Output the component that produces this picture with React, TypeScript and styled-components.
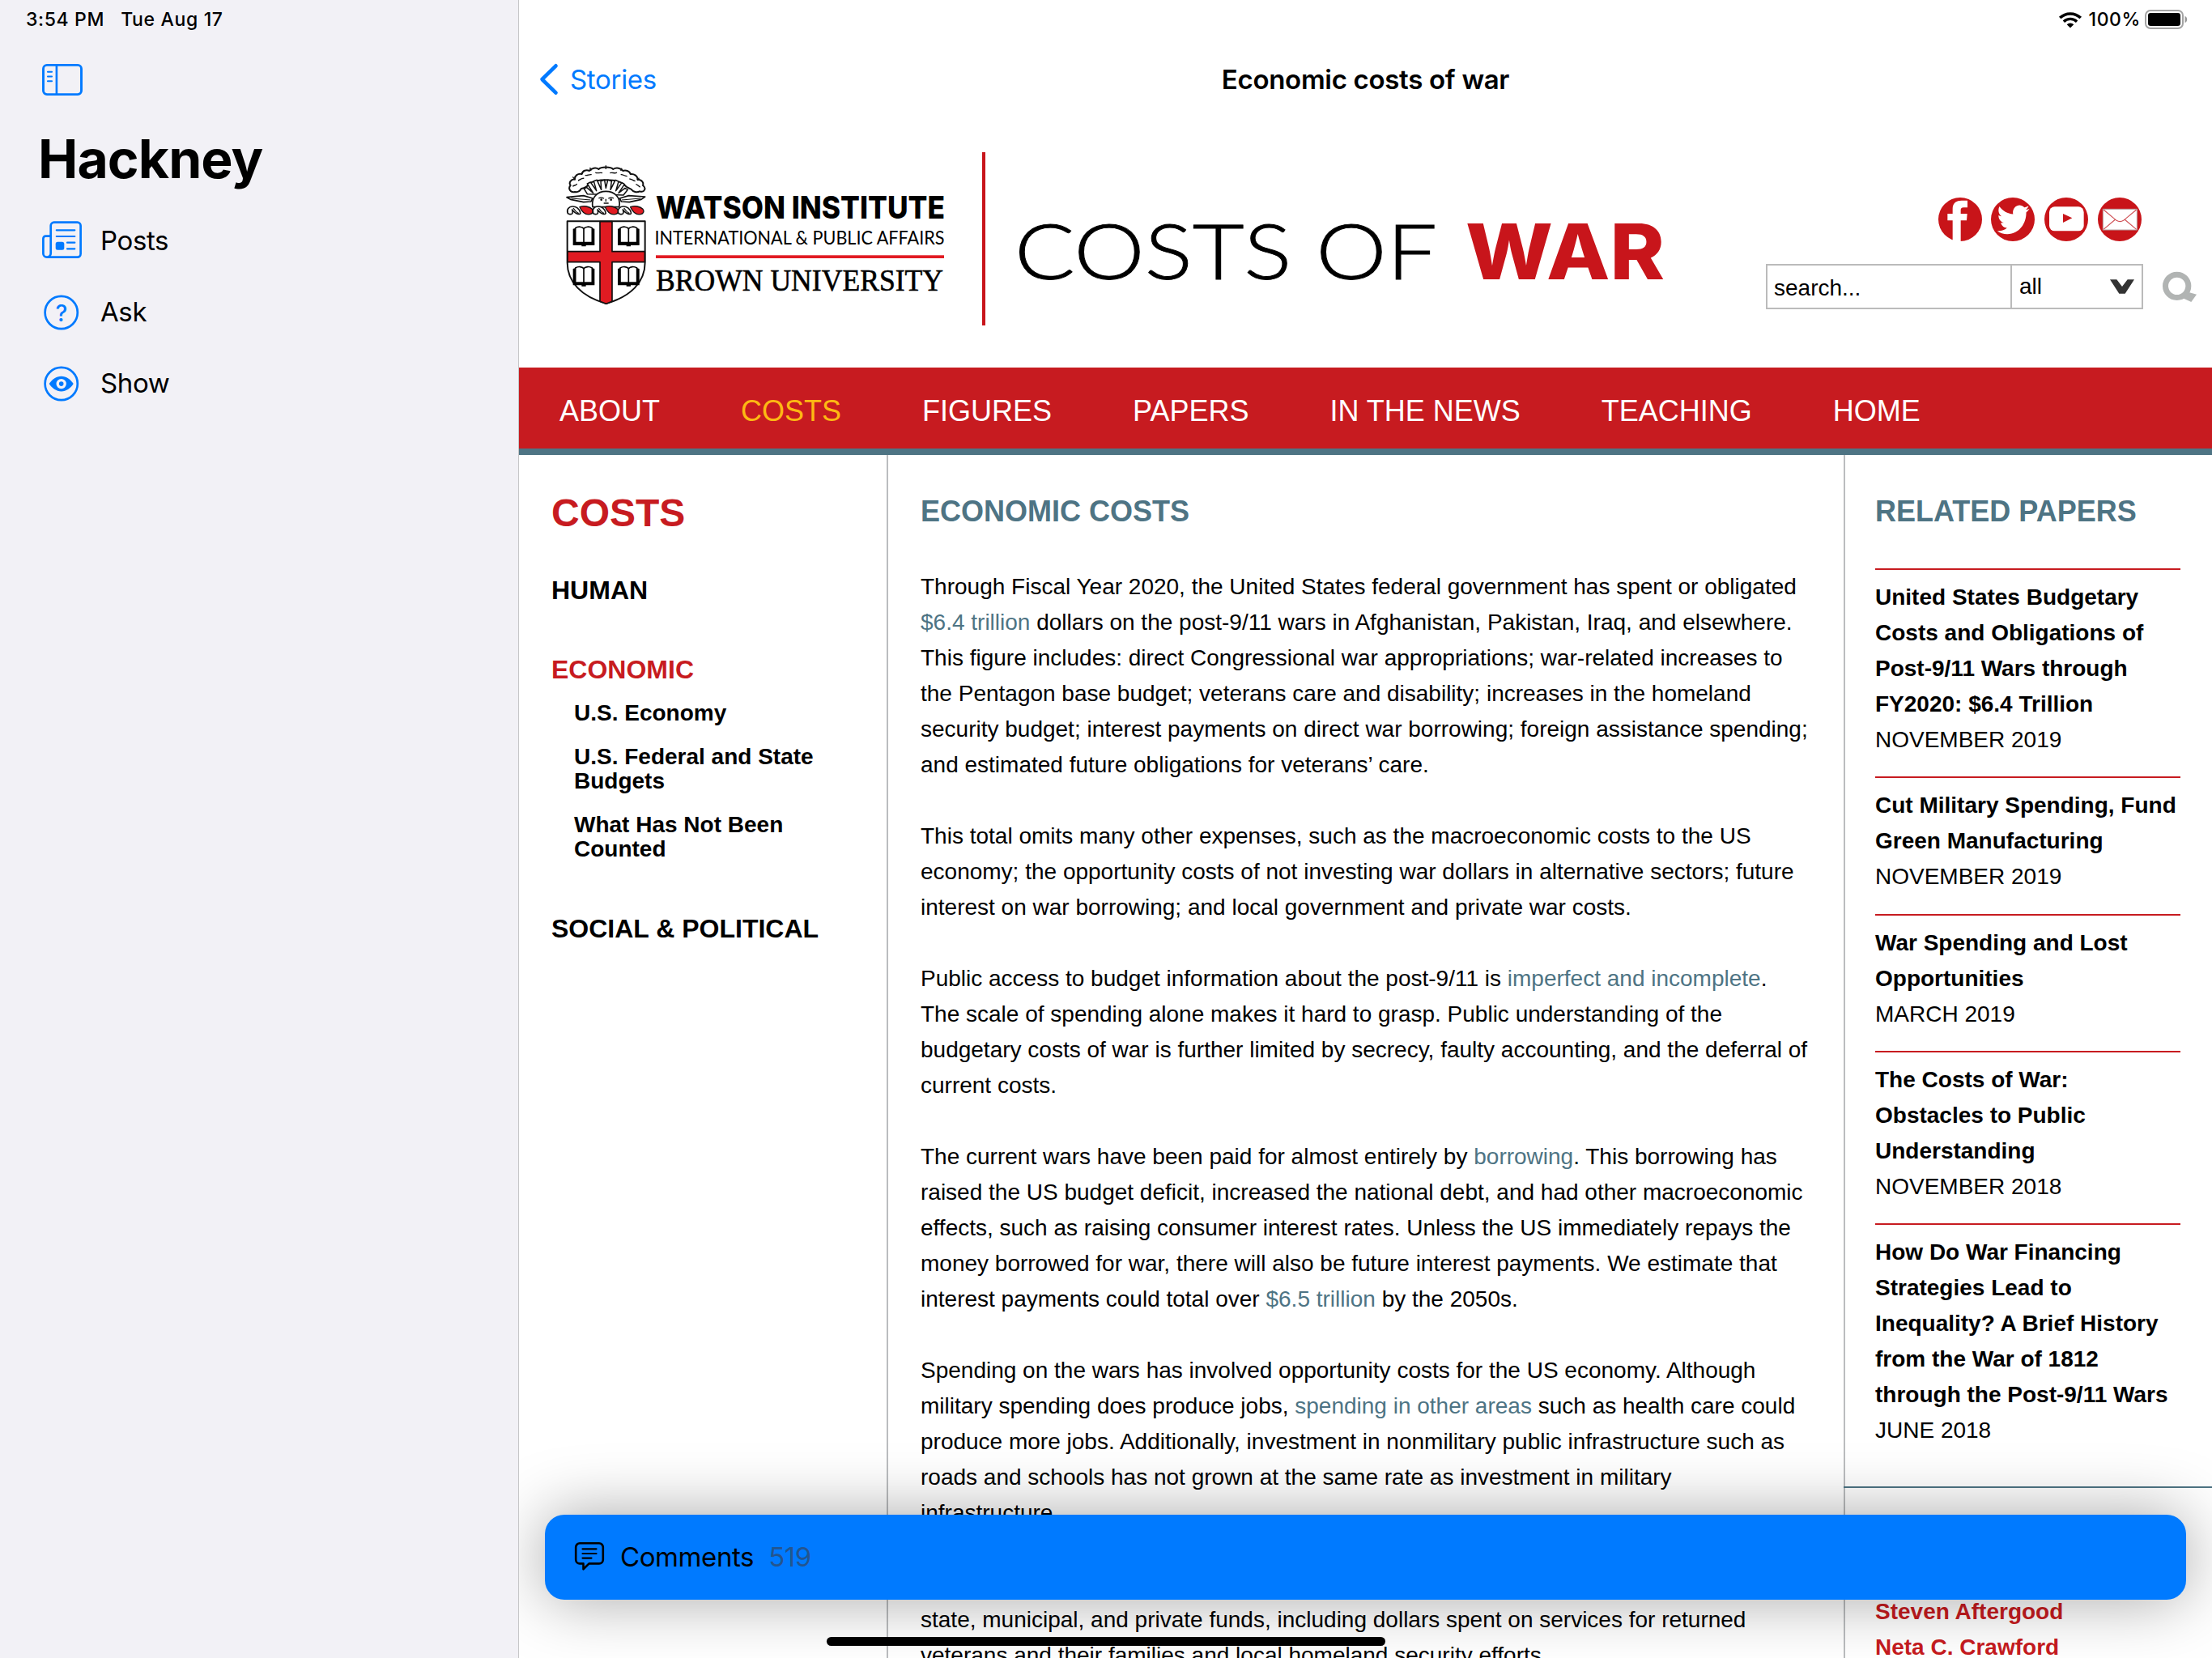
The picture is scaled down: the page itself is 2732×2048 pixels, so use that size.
import React from "react";
import styled, { createGlobalStyle } from "styled-components";

const SYSTEM = `Inter, "Liberation Sans", sans-serif`;
const WEB = `"Liberation Sans", Arial, sans-serif`;
const BLUE = "#007aff";
const RED = "#c71b20";
const TEAL = "#4e7484";

const GlobalStyle = createGlobalStyle`
  * { box-sizing: border-box; }
  body { margin: 0; background: #fff; }
  svg { overflow: visible; flex: none; }
`;

const Screen = styled.div`
  display: grid;
  grid-template-columns: 641px 2091px;
  width: 2732px;
  height: 2048px;
  overflow: hidden;
  position: relative;
  color: #000;
  font-family: ${SYSTEM};
`;

/* ---------- sidebar ---------- */

const Sidebar = styled.aside`
  height: 2048px;
  background: #f2f1f6;
  border-right: 1px solid #c6c6c8;
`;

const StatusBar = styled.div<{ $end?: boolean }>`
  display: flex;
  align-items: center;
  justify-content: ${(p) => (p.$end ? "flex-end" : "flex-start")};
  height: 48px;
  padding: ${(p) => (p.$end ? "0 30px 0 0" : "0 0 0 32px")};
  font-size: 23px;
  line-height: 48px;
  font-weight: 500;
  white-space: pre;
`;

const StatusText = styled.span<{ $track: number; $gap?: number }>`
  letter-spacing: ${(p) => p.$track}px;
  margin-right: ${(p) => p.$gap ?? 0}px;
`;

const SidebarTools = styled.div`
  display: flex;
  align-items: center;
  height: 108px;
  padding: 0 0 6px 50px;
`;

const AppTitle = styled.h1`
  margin: 0 0 17px;
  padding-left: 47px;
  font-size: 66px;
  line-height: 80px;
  font-weight: 700;
  letter-spacing: -0.9px;
`;

const NavRow = styled.a`
  display: flex;
  align-items: center;
  gap: 20px;
  height: 88px;
  padding-left: 50px;
  font-size: 33px;
  letter-spacing: -0.4px;
`;

/* ---------- detail pane ---------- */

const Detail = styled.main`
  position: relative;
  height: 2048px;
  overflow: hidden;
  background: #fff;
`;

const NavBar = styled.div`
  display: grid;
  grid-template-columns: 1fr auto 1fr;
  align-items: center;
  height: 100px;
  font-size: 33px;
  line-height: 44px;
`;

const BackButton = styled.a`
  display: flex;
  align-items: center;
  gap: 13px;
  padding-left: 25px;
  color: ${BLUE};
  letter-spacing: -0.3px;
`;

const NavTitle = styled.div`
  font-weight: 600;
  letter-spacing: -0.3px;
`;

const SiteHeader = styled.header`
  display: flex;
  align-items: flex-start;
  height: 306px;
  padding-top: 40px;
  padding-left: 49px;
`;

const HeaderRule = styled.div`
  width: 4px;
  height: 214px;
  margin: 0 32px 0 33px;
  background: #c8151b;
`;

const HeaderTools = styled.div`
  display: flex;
  flex-direction: column;
  margin: 56px 0 0 90px;
  width: 535px;
`;

const SearchRow = styled.div`
  display: flex;
  align-items: center;
  margin-top: 28px;
  font: 28px/52px ${WEB};
`;

const SearchField = styled.div`
  width: 302px;
  height: 56px;
  padding: 2px 0 0 8px;
  border: 2px solid #bbb;
  border-right: 0;
`;

const SearchScope = styled.div`
  display: flex;
  align-items: center;
  justify-content: space-between;
  width: 164px;
  height: 56px;
  padding: 0 9px 0 9px;
  margin-right: 24px;
  border: 2px solid #bbb;
`;

const SiteNav = styled.nav`
  display: flex;
  gap: 100px;
  height: 108px;
  padding-left: 50px;
  background: ${RED};
  border-bottom: 8px solid ${TEAL};
  font: 36px/108px ${WEB};
`;

const SiteNavLink = styled.a<{ $active?: boolean }>`
  color: ${(p) => (p.$active ? "#fdb813" : "#fff")};
`;

const Columns = styled.div`
  display: grid;
  grid-template-columns: 456px 1180px 455px;
  height: 1486px;
  overflow: hidden;
  font-family: ${WEB};
  white-space: nowrap;
`;

const SectionMenu = styled.div`
  padding: 44px 0 0 40px;
  border-right: 2px solid #bbbdbf;
  font-weight: 700;
`;

const MenuTitle = styled.h2`
  margin: 0 0 47px;
  font-size: 48px;
  line-height: 56px;
  color: ${RED};
`;

const MenuHead = styled.div<{ $active?: boolean; $before?: number }>`
  margin-top: ${(p) => p.$before ?? 0}px;
  font-size: 32px;
  line-height: 40px;
  color: ${(p) => (p.$active ? RED : "#000")};
`;

const MenuItem = styled.div<{ $before: number }>`
  margin-top: ${(p) => p.$before}px;
  padding-left: 28px;
  font-size: 28px;
  line-height: 30px;
`;

const Article = styled.article`
  padding: 48px 0 0 40px;
  font-size: 28px;
  line-height: 44px;
`;

const ColumnTitle = styled.h3<{ $after: number }>`
  margin: 0 0 ${(p) => p.$after}px;
  font-size: 36px;
  line-height: 44px;
  font-weight: 700;
  color: ${TEAL};
`;

const Paragraph = styled.p`
  margin: 0 0 44px;
`;

const Line = styled.span`
  display: block;
  height: 44px;
`;

const Link = styled.a`
  color: ${TEAL};
`;

const Related = styled.div`
  border-left: 2px solid #bbbdbf;
  font-size: 28px;
  line-height: 44px;
`;

const RelatedList = styled.div`
  height: 1274px;
  padding: 48px 39px 0 37px;
`;

const Paper = styled.div`
  padding: 12px 0 23.3px;
  border-top: 2px solid ${RED};
`;

const PaperTitle = styled.div`
  font-weight: 700;
`;

const People = styled.div`
  margin-left: -2px;
  padding: 131px 0 0 39px;
  border-top: 2px solid ${TEAL};
  font-weight: 700;
  color: ${RED};
`;

/* ---------- overlays ---------- */

const CommentsBar = styled.button`
  position: absolute;
  left: 32px;
  top: 1871px;
  display: flex;
  align-items: center;
  width: 2027px;
  height: 105px;
  padding: 0 0 1px 36px;
  border: 0;
  border-radius: 24px;
  background: ${BLUE};
  box-shadow: 0 0 80px rgba(0, 0, 0, 0.35);
  font: 33px/44px ${SYSTEM};
  color: #000;
  letter-spacing: -0.4px;
`;

const CommentsLabel = styled.span`
  margin-left: 19px;
`;

const CommentsCount = styled.span`
  margin-left: 18px;
  color: rgba(60, 60, 67, 0.6);
`;

const HomeIndicator = styled.div`
  position: absolute;
  left: 1021px;
  top: 2022px;
  width: 690px;
  height: 11px;
  border-radius: 6px;
  background: #000;
`;

/* ---------- drawings ---------- */

const SidebarIcon = () => (
  <svg width="54" height="42" viewBox="0 0 54 42" fill="none" stroke={BLUE} strokeLinecap="round">
    <rect x="3.5" y="2.4" width="47" height="36.2" rx="4.5" strokeWidth="2.9" />
    <path d="M19.9 2.4V38.6" strokeWidth="2.6" />
    <path d="M9 10.8H14M9 16.5H14M9 22.2H14" strokeWidth="2.1" />
  </svg>
);

const PostsIcon = () => (
  <svg width="54" height="54" viewBox="0 0 54 54" fill="none" stroke={BLUE} strokeLinecap="round">
    <path
      d="M12.7 43V8.7a4 4 0 0 1 4-4H45.6a4 4 0 0 1 4 4V43.6a4 4 0 0 1-4 4H7.8a4.4 4.4 0 0 1-4.4-4.4V24.7a3 3 0 0 1 3-3H12.7M12.7 43a4.6 4.6 0 0 1-4.6 4.6"
      strokeWidth="2.7"
    />
    <path d="M19.8 14.3H42.3M19.8 22H42.3M33 29.7H42.3M33 37.3H42.3" strokeWidth="2.2" />
    <rect x="18.7" y="28.7" width="10.6" height="10" rx="2.5" fill={BLUE} stroke="none" />
  </svg>
);

const AskIcon = () => (
  <svg width="54" height="54" viewBox="0 0 54 54">
    <circle cx="25.7" cy="28" r="20.1" fill="none" stroke={BLUE} strokeWidth="2.7" />
    <text x="25.7" y="38.5" textAnchor="middle" fontFamily={SYSTEM} fontSize="28" fontWeight="500" fill={BLUE}>
      ?
    </text>
  </svg>
);

const ShowIcon = () => (
  <svg width="54" height="54" viewBox="0 0 54 54">
    <circle cx="25.7" cy="28" r="20.1" fill="none" stroke={BLUE} strokeWidth="2.7" />
    <path d="M10.7 28.1C14 23 19.5 18.8 25.7 18.8S37.4 23 40.7 28.1C37.4 33.3 31.9 37.5 25.7 37.5S14 33.3 10.7 28.1Z" fill={BLUE} />
    <circle cx="25.7" cy="28.1" r="6.2" fill="#f2f1f6" />
    <circle cx="25.7" cy="28.1" r="2.8" fill={BLUE} />
  </svg>
);

const BackChevron = () => (
  <svg width="25" height="42" viewBox="0 0 25 42" fill="none" stroke={BLUE} strokeWidth="4.6" strokeLinecap="round" strokeLinejoin="round">
    <path d="M20.500 4.300L3.500 21L20.500 37.700" />
  </svg>
);

const WifiSvg = styled.svg`
  margin-right: 9px;
`;

const WifiIcon = () => (
  <WifiSvg width="28" height="21" viewBox="0 0 28 21" fill="none" stroke="#000">
    <path d="M1.2 8.1A18.3 18.3 0 0 1 26.8 8.1" strokeWidth="3.5" />
    <path d="M5.9 12.7A11.6 11.6 0 0 1 22.1 12.7" strokeWidth="3.3" />
    <path d="M14 20.5L9.7 16.2A6.1 6.1 0 0 1 18.3 16.2Z" fill="#000" stroke="none" />
  </WifiSvg>
);

const BatterySvg = styled.svg`
  margin-left: 5px;
`;

const BatteryIcon = () => (
  <BatterySvg width="53" height="24" viewBox="0 0 53 24">
    <rect x="1" y="1" width="46" height="22" rx="6" fill="none" stroke="#a3a3a3" strokeWidth="2" />
    <rect x="4" y="4" width="40" height="16" rx="3.2" fill="#000" />
    <path d="M49.5 8c3.6 1 3.6 7 0 8z" fill="#999" />
  </BatterySvg>
);

const Book = ({ x, y }: { x: number; y: number }) => (
  <g transform={`translate(${x} ${y})`}>
    <path d="M0 7L10 4V60H0ZM80 7L70 4V60H80Z" fill="#000" />
    <path d="M9 4C20-3 33-1 40 6C47-1 60-3 71 4V58H9Z" fill="#fff" stroke="#000" strokeWidth="5" />
    <path d="M40 4V60" stroke="#000" strokeWidth="5" />
    <path d="M0 59H80V68H48V72H32V68H0Z" fill="#000" />
  </g>
);

const Crest = () => (
  <g transform="translate(0 7) scale(0.3333)" stroke="#111" strokeLinejoin="round">
    <path
      d="M60 126C42 130 34 112 44 102C36 92 46 78 60 80C58 66 72 56 86 60C88 48 102 42 114 48C122 38 138 34 148 42C158 32 192 32 202 42C214 34 230 38 238 48C250 44 264 50 266 60C280 58 294 68 292 80C308 80 316 92 312 102C326 112 318 130 300 124C290 130 276 126 268 116C256 112 246 104 240 96C222 84 204 82 176 82C148 82 130 84 112 96C106 108 96 112 84 114C78 124 70 128 60 126Z"
      fill="#fff"
      strokeWidth="6"
    />
    <path d="M52 106C58 100 64 104 68 96M72 84C80 82 84 74 94 76M98 64C106 68 112 60 122 62M136 54C144 60 152 52 162 56M190 56C198 52 208 60 216 54M230 62C238 60 244 68 254 68M262 78C272 78 276 86 284 86M286 98C292 98 296 106 302 108" fill="none" strokeWidth="4" />
    <path d="M175 28V42M116 36L120 48M234 38L230 48M52 70L60 80M298 74L292 84" strokeWidth="4" />
    <path d="M106 134L94 114L104 110L128 130L106 96L118 90L140 122L130 86L142 82L158 118L156 86L170 82L175 112L182 82L196 86L192 118L210 82L222 88L212 122L234 92L244 98L222 130L246 112L256 118L240 138Z" fill="#fff" strokeWidth="4.500" />
    <path d="M30 146L92 140L126 150L120 162L92 164L44 154ZM320 144L260 140L226 150L232 162L262 164L306 154Z" fill="#fff" strokeWidth="5" />
    <path d="M46 150L118 156M304 150L234 156" strokeWidth="3" />
    <path d="M126 182C120 146 144 124 175 124S232 146 224 182Z" fill="#fff" strokeWidth="5" />
    <path d="M148 150Q158 144 168 151M184 151Q194 144 204 150M167 168H185M175 152V162" fill="none" strokeWidth="4" />
    <circle cx="158" cy="155" r="4" fill="#111" stroke="none" />
    <circle cx="194" cy="155" r="4" fill="#111" stroke="none" />
    {[32, 126, 220].map((x) => (
      <g key={x} transform={`translate(${x} 178)`} strokeWidth="5">
        <path d="M2 28C-4 14 6 2 20 2C36 2 44 12 48 24C50 28 46 32 40 30C30 28 24 22 18 14C22 24 20 32 10 31Z" fill="#fff" />
        <path d="M22 8C28 18 34 24 42 28" fill="none" strokeWidth="4" />
        <path d="M46 4C62-2 82 2 92 12C98 20 94 30 84 31C66 34 54 22 46 4Z" fill="#e11b22" strokeWidth="4" />
      </g>
    ))}
    <path d="M32 235H320V388C320 460 268 514 176 540C84 514 32 460 32 388Z" fill="#fff" strokeWidth="6" />
    <path d="M153 236H198V347H319V386H198V532L176 541L153 532V386H33V347H153Z" fill="#e11b22" strokeWidth="5" />
    <g stroke="none">
      <Book x={53} y={256} />
      <Book x={219} y={256} />
      <Book x={53} y={404} />
      <Book x={219} y={404} />
    </g>
  </g>
);

const BrandLogo = () => (
  <svg width="490" height="214" viewBox="0 0 490 214">
    <Crest />
    <text x="120" y="82" textLength="357" lengthAdjust="spacingAndGlyphs" fontFamily={SYSTEM} fontWeight="800" fontSize="38.5">
      WATSON INSTITUTE
    </text>
    <text x="118.5" y="114" textLength="358" lengthAdjust="spacingAndGlyphs" fontFamily="Lato, sans-serif" fontSize="23">
      INTERNATIONAL &amp; PUBLIC AFFAIRS
    </text>
    <rect x="120" y="127.3" width="356" height="3.7" fill="#e11b22" />
    <text x="120" y="171" textLength="355" lengthAdjust="spacingAndGlyphs" fontFamily='"Liberation Serif", serif' fontSize="38" stroke="#000" strokeWidth="0.6">
      BROWN UNIVERSITY
    </text>
  </svg>
);

const CostsOfWar = () => (
  <svg width="842" height="214" viewBox="0 0 842 214">
    <text x="4" y="157" textLength="522" lengthAdjust="spacingAndGlyphs" fontFamily="Lato, sans-serif" fontWeight="300" fontSize="94" fill="#000" stroke="#000" strokeWidth="0.9">
      COSTS OF
    </text>
    <text x="561" y="157" textLength="246" lengthAdjust="spacingAndGlyphs" fontFamily={SYSTEM} fontWeight="800" fontSize="95" fill="#c8151b">
      WAR
    </text>
  </svg>
);

const SocialSvg = styled.svg`
  margin-left: 213px;
`;

const SocialIcons = () => (
  <SocialSvg width="252" height="54" viewBox="12 27 756 162">
    <g fill="#c81419">
      <circle cx="93" cy="108" r="81" />
      <circle cx="288" cy="108" r="81" />
      <circle cx="486" cy="108" r="81" />
      <circle cx="684" cy="108" r="81" />
    </g>
    <path d="M65 190V112H46V87H65V68C65 48 78 38 98 38H120V64H106C97 64 95 68 95 74V87H119L117 112H95V190Z" fill="#fff" />
    <path
      transform="translate(230 43) scale(0.234 0.258)"
      fill="#fff"
      d="M459.37 151.716c.325 4.548.325 9.097.325 13.645 0 138.72-105.583 298.558-298.558 298.558-59.452 0-114.68-17.219-161.137-47.106 8.447.974 16.568 1.299 25.34 1.299 49.055 0 94.213-16.568 130.274-44.832-46.132-.975-84.792-31.188-98.112-72.772 6.498.974 12.995 1.624 19.818 1.624 9.421 0 18.843-1.3 27.614-3.573-48.081-9.747-84.143-51.98-84.143-102.985v-1.299c13.969 7.797 30.214 12.67 47.431 13.319-28.264-18.843-46.781-51.005-46.781-87.391 0-19.492 5.197-37.36 14.294-52.954 51.655 63.675 129.3 105.258 216.365 109.807-1.624-7.797-2.599-15.918-2.599-24.04 0-57.828 46.782-104.934 104.934-104.934 30.213 0 57.502 12.67 76.67 33.137 23.715-4.548 46.456-13.32 66.599-25.34-7.798 24.366-24.366 44.833-46.132 57.827 21.117-2.273 41.584-8.122 60.426-16.243-14.292 20.791-32.161 39.308-52.628 54.253z"
    />
    <rect x="423" y="61" width="128" height="90" rx="20" fill="#fff" />
    <path d="M474 87L508 103L474 120Z" fill="#c81419" />
    <rect x="622" y="70" width="126" height="77" fill="#fff" stroke="#b5a3a3" strokeWidth="3" />
    <path d="M624 72L672 112Q685 120 698 112L746 72M624 145L668 108M746 145L702 108" fill="none" stroke="#cf5055" strokeWidth="3.5" />
  </SocialSvg>
);

const ScopeChevron = () => (
  <svg width="30" height="18" viewBox="650 331 90 54">
    <path d="M650 332H675L695 358L715 332H740L706 384H684Z" fill="#333" />
  </svg>
);

const SearchIcon = () => (
  <svg width="43" height="38" viewBox="842 302 129 114">
    <circle cx="895" cy="357" r="42.5" fill="none" stroke="#b1b4b3" strokeWidth="21" />
    <path d="M926 376L968 388L948 416L914 400Z" fill="#b1b4b3" />
  </svg>
);

const CommentsIcon = () => (
  <svg width="38" height="38" viewBox="0 0 38 38" fill="none" stroke="#000" strokeWidth="2.6" strokeLinecap="round" strokeLinejoin="round">
    <path d="M7 2.3H31a4.8 4.8 0 0 1 4.8 4.8V22.6a4.8 4.8 0 0 1-4.8 4.8H18.5L11.5 34.3V27.4H7a4.8 4.8 0 0 1-4.8-4.8V7.1A4.8 4.8 0 0 1 7 2.3Z" />
    <path d="M10.5 9.3H27.5M10.5 15H27.5M10.5 20.6H21.5" strokeWidth="2.2" />
  </svg>
);

/* ---------- content ---------- */

const siteLinks = ["ABOUT", "COSTS", "FIGURES", "PAPERS", "IN THE NEWS", "TEACHING", "HOME"];

const paragraphs: React.ReactNode[][] = [
  [
    "Through Fiscal Year 2020, the United States federal government has spent or obligated",
    <><Link>$6.4 trillion</Link> dollars on the post-9/11 wars in Afghanistan, Pakistan, Iraq, and elsewhere.</>,
    "This figure includes: direct Congressional war appropriations; war-related increases to",
    "the Pentagon base budget; veterans care and disability; increases in the homeland",
    "security budget; interest payments on direct war borrowing; foreign assistance spending;",
    "and estimated future obligations for veterans’ care.",
  ],
  [
    "This total omits many other expenses, such as the macroeconomic costs to the US",
    "economy; the opportunity costs of not investing war dollars in alternative sectors; future",
    "interest on war borrowing; and local government and private war costs.",
  ],
  [
    <>Public access to budget information about the post-9/11 is <Link>imperfect and incomplete</Link>.</>,
    "The scale of spending alone makes it hard to grasp. Public understanding of the",
    "budgetary costs of war is further limited by secrecy, faulty accounting, and the deferral of",
    "current costs.",
  ],
  [
    <>The current wars have been paid for almost entirely by <Link>borrowing</Link>. This borrowing has</>,
    "raised the US budget deficit, increased the national debt, and had other macroeconomic",
    "effects, such as raising consumer interest rates. Unless the US immediately repays the",
    "money borrowed for war, there will also be future interest payments. We estimate that",
    <>interest payments could total over <Link>$6.5 trillion</Link> by the 2050s.</>,
  ],
  [
    "Spending on the wars has involved opportunity costs for the US economy. Although",
    <>military spending does produce jobs, <Link>spending in other areas</Link> such as health care could</>,
    "produce more jobs. Additionally, investment in nonmilitary public infrastructure such as",
    "roads and schools has not grown at the same rate as investment in military",
    "infrastructure.",
  ],
  [
    "",
    "state, municipal, and private funds, including dollars spent on services for returned",
    "veterans and their families and local homeland security efforts.",
  ],
];

const papers = [
  { title: ["United States Budgetary", "Costs and Obligations of", "Post-9/11 Wars through", "FY2020: $6.4 Trillion"], date: "NOVEMBER 2019" },
  { title: ["Cut Military Spending, Fund", "Green Manufacturing"], date: "NOVEMBER 2019" },
  { title: ["War Spending and Lost", "Opportunities"], date: "MARCH 2019" },
  { title: ["The Costs of War:", "Obstacles to Public", "Understanding"], date: "NOVEMBER 2018" },
  { title: ["How Do War Financing", "Strategies Lead to", "Inequality? A Brief History", "from the War of 1812", "through the Post-9/11 Wars"], date: "JUNE 2018" },
];

export default function App() {
  return (
    <>
      <GlobalStyle />
      <Screen>
        <Sidebar>
          <StatusBar>
            <StatusText $track={0.65} $gap={20}>3:54 PM</StatusText>
            <StatusText $track={0.65}>Tue Aug 17</StatusText>
          </StatusBar>
          <SidebarTools>
            <SidebarIcon />
          </SidebarTools>
          <AppTitle>Hackney</AppTitle>
          <NavRow><PostsIcon /><span>Posts</span></NavRow>
          <NavRow><AskIcon /><span>Ask</span></NavRow>
          <NavRow><ShowIcon /><span>Show</span></NavRow>
        </Sidebar>

        <Detail>
          <StatusBar $end>
            <WifiIcon />
            <StatusText $track={0.6}>100%</StatusText>
            <BatteryIcon />
          </StatusBar>
          <NavBar>
            <BackButton><BackChevron />Stories</BackButton>
            <NavTitle>Economic costs of war</NavTitle>
          </NavBar>

          <SiteHeader>
            <BrandLogo />
            <HeaderRule />
            <CostsOfWar />
            <HeaderTools>
              <SocialIcons />
              <SearchRow>
                <SearchField>search...</SearchField>
                <SearchScope>all<ScopeChevron /></SearchScope>
                <SearchIcon />
              </SearchRow>
            </HeaderTools>
          </SiteHeader>

          <SiteNav>
            {siteLinks.map((label) => (
              <SiteNavLink key={label} $active={label === "COSTS"}>{label}</SiteNavLink>
            ))}
          </SiteNav>

          <Columns>
            <SectionMenu>
              <MenuTitle>COSTS</MenuTitle>
              <MenuHead>HUMAN</MenuHead>
              <MenuHead $active $before={58}>ECONOMIC</MenuHead>
              <MenuItem $before={19}>U.S. Economy</MenuItem>
              <MenuItem $before={24}>U.S. Federal and State<br />Budgets</MenuItem>
              <MenuItem $before={24}>What Has Not Been<br />Counted</MenuItem>
              <MenuHead $before={63}>SOCIAL &amp; POLITICAL</MenuHead>
            </SectionMenu>

            <Article>
              <ColumnTitle $after={49}>ECONOMIC COSTS</ColumnTitle>
              {paragraphs.map((lines, i) => (
                <Paragraph key={i}>
                  {lines.map((line, j) => <Line key={j}>{line}</Line>)}
                </Paragraph>
              ))}
            </Article>

            <Related>
              <RelatedList>
                <ColumnTitle $after={48}>RELATED PAPERS</ColumnTitle>
                {papers.map((paper) => (
                  <Paper key={paper.title[0]}>
                    <PaperTitle>
                      {paper.title.map((line) => <Line key={line}>{line}</Line>)}
                    </PaperTitle>
                    {paper.date}
                  </Paper>
                ))}
              </RelatedList>
              <People>
                <Line>Steven Aftergood</Line>
                <Line>Neta C. Crawford</Line>
              </People>
            </Related>
          </Columns>

          <CommentsBar>
            <CommentsIcon />
            <CommentsLabel>Comments</CommentsLabel>
            <CommentsCount>519</CommentsCount>
          </CommentsBar>
        </Detail>
        <HomeIndicator />
      </Screen>
    </>
  );
}
